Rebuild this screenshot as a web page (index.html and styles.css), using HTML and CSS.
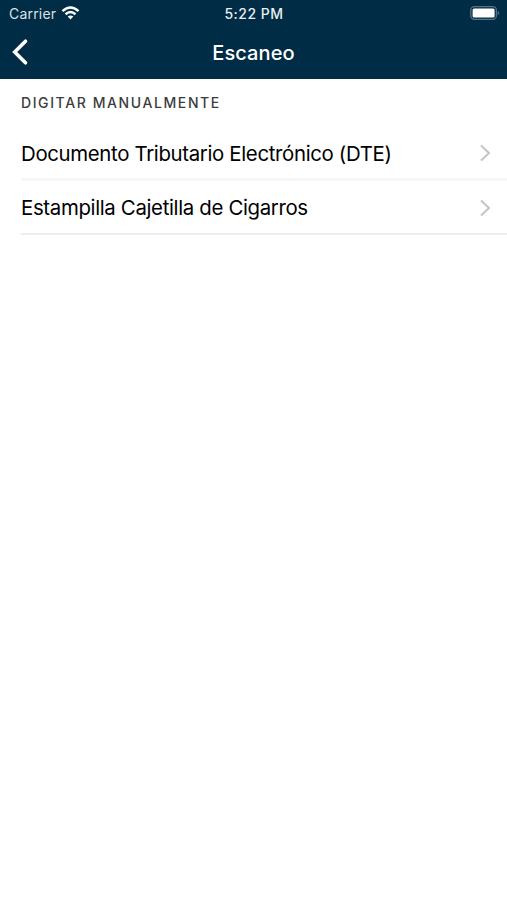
FILE: index.html
```html
<!DOCTYPE html>
<html lang="es">
<head>
<meta charset="utf-8">
<title>Escaneo</title>
<link rel="stylesheet" href="styles.css">
</head>
<body>
<header class="header">
  <div class="status">
    <div class="carrier"><span>Carrier</span>
      <svg class="wifi" width="19" height="14" viewBox="0 0 18 14"><g fill="none" stroke="#fff" stroke-width="2.5"><path d="M1 5.2Q9-2.2 17 5.2"/><path d="M4 8.3Q9 3.8 14 8.3"/></g><path d="M6.2 10.5Q9 8.3 11.8 10.5L9 13.5Z" fill="#fff"/></svg>
    </div>
    <time class="time">5:22 PM</time>
    <svg class="battery" width="30" height="14" viewBox="0 0 30 14"><rect x=".8" y=".7" width="25.6" height="12.6" rx="3.5" fill="none" stroke="#587387" stroke-width="1.3"/><rect x="2.6" y="2.5" width="22" height="9" rx="1.5" fill="#fff"/><path d="M27.7 4.7q3.2 2.3 0 4.6z" fill="#587387"/></svg>
  </div>
  <nav class="nav">
    <svg class="back" width="18" height="28" viewBox="0 0 18 28"><path d="M14.5 3.2L3.7 14L14.5 24.8" fill="none" stroke="#fff" stroke-width="3.6" stroke-linecap="round"/></svg>
    <h1 class="title">Escaneo</h1>
  </nav>
</header>
<main>
  <h2 class="section">DIGITAR MANUALMENTE</h2>
  <div class="list">
    <div class="row row-light"><span class="label">Documento Tributario Electrónico (DTE)</span>
      <svg class="chevron" width="12" height="18" viewBox="0 0 12 18"><path d="M2 1.5L10 9L2 16.5" fill="none" stroke="#c4c4c6" stroke-width="2"/></svg></div>
    <div class="row"><span class="label">Estampilla Cajetilla de Cigarros</span>
      <svg class="chevron" width="12" height="18" viewBox="0 0 12 18"><path d="M2 1.5L10 9L2 16.5" fill="none" stroke="#c4c4c6" stroke-width="2"/></svg></div>
  </div>
</main>
</body>
</html>
```
FILE: styles.css
```css
* { box-sizing: border-box; }
body { margin: 0; background: #fff; color: #000; font-family: Inter, sans-serif; }
.header { height: 79px; background: #002c45; color: #fff; }
.status { height: 27px; padding: 0 7px 0 9px; display: grid; grid-template-columns: 1fr auto 1fr; align-items: center; }
.carrier { display: flex; align-items: center; gap: 5px; font-size: 14px; letter-spacing: .2px; color: #d9e1e7; }
.wifi { margin-top: -1px; }
.time { margin-right: 1px; font-size: 14px; font-weight: 550; letter-spacing: .5px; color: #e9eef1; }
.battery { justify-self: end; margin-top: -1px; }
.nav { height: 51px; display: grid; grid-template-columns: 40px 1fr 40px; align-items: center; }
.back { margin: -2px 0 0 11px; }
.title { margin: 0; padding-top: 1px; text-align: center; font-size: 20px; font-weight: 550; letter-spacing: .1px; }
.section { margin: 0; height: 48px; padding: 0 0 1px 21px; display: flex; align-items: center; font-size: 14px; font-weight: 500; letter-spacing: 1.6px; color: #3c3c3e; }
.list { margin-left: 21px; }
.row { height: 54px; padding: 1px 16px 0 0; display: flex; justify-content: space-between; align-items: center; border-bottom: 2px solid #ededed; }
.row-light { border-bottom: 3px solid #f7f7f7; }
.label { font-size: 20.4px; letter-spacing: -.34px; white-space: nowrap; }
```
